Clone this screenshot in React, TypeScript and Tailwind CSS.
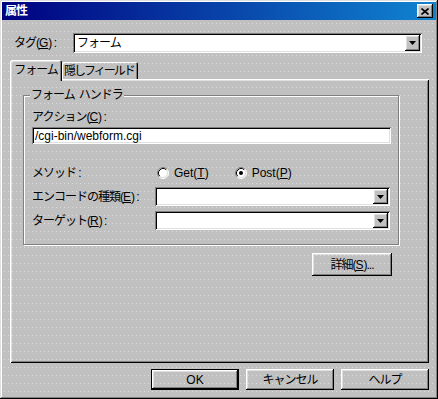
import type { ReactNode } from 'react';

const font = "font-['Liberation_Sans','Noto_Sans_CJK_JP',sans-serif]";
const dots =
  'bg-[#c0c0c0] bg-[linear-gradient(#c0c0c0_7px,transparent_7px),linear-gradient(to_right,#dcdcdc_1px,#c0c0c0_1px)] bg-[length:4px_8px]';
const raised =
  'shadow-[inset_-1px_-1px_#000,inset_1px_1px_#fff,inset_-2px_-2px_#808080,inset_2px_2px_#dfdfdf]';
const sunken =
  'shadow-[inset_1px_1px_#808080,inset_-1px_-1px_#fff,inset_2px_2px_#000,inset_-2px_-2px_#dfdfdf]';

const Key = ({ children }: { children: ReactNode }) => (
  <span className="underline underline-offset-1 tracking-normal">{children}</span>
);

const Arrow = () => (
  <svg width="7" height="4" viewBox="0 0 7 4">
    <path d="M0 0h7l-3.5 4z" fill="#000" />
  </svg>
);

function Combo({ value = '', className = '' }: { value?: string; className?: string }) {
  return (
    <div className={`flex items-stretch bg-white p-[2px] ${sunken} ${className}`}>
      <span className="flex flex-1 items-center pl-[2px] text-black">{value}</span>
      <div className={`flex w-[15px] items-center justify-center ${dots} ${raised}`}>
        <Arrow />
      </div>
    </div>
  );
}

function Radio({ checked }: { checked?: boolean }) {
  return (
    <svg width="12" height="12" viewBox="0 0 12 12">
      <circle cx="6" cy="6" r="5" fill="#fff" />
      <path d="M2.11 9.89A5.5 5.5 0 0 1 9.89 2.11" stroke="#808080" fill="none" />
      <path d="M9.89 2.11A5.5 5.5 0 0 1 2.11 9.89" stroke="#fff" fill="none" />
      <path d="M2.82 9.18A4.5 4.5 0 0 1 9.18 2.82" stroke="#000" fill="none" />
      <path d="M9.18 2.82A4.5 4.5 0 0 1 2.82 9.18" stroke="#dfdfdf" fill="none" />
      {checked && <circle cx="6" cy="6" r="2" fill="#000" />}
    </svg>
  );
}

export default function App() {
  return (
    <div
      className={`flex h-[399px] w-[438px] flex-col px-[2px] pt-[2px] text-[12px] leading-[14px] tracking-[-1px] whitespace-nowrap text-black ${font} ${dots} shadow-[inset_-1px_-1px_#000,inset_1px_1px_#dfdfdf,inset_-2px_-2px_#808080,inset_2px_2px_#fff]`}
    >
      {/* title bar */}
      <div className="flex h-[18px] items-center justify-between bg-[linear-gradient(to_right,#000080,#1084d0)] pl-[3px] pr-[3px]">
        <span className="font-bold text-white">属性</span>
        <div className={`flex h-[14px] w-[16px] items-center justify-center ${dots} ${raised}`}>
          <svg width="8" height="7" viewBox="0 0 8 7">
            <path d="M0.5 0.5l7 6M7.5 0.5l-7 6" stroke="#000" strokeWidth="1.6" />
          </svg>
        </div>
      </div>

      <div className="flex flex-1 flex-col pl-[8px] pr-[7px]">
        {/* tag row */}
        <div className="mt-[13px] flex h-[20px] items-center">
          <span className="w-[63px] pl-[4px]">
            タグ(<Key>G</Key>) :
          </span>
          <Combo value="フォーム" className="mr-[7px] h-[20px] flex-1" />
        </div>

        {/* tabs */}
        <div className="mt-[7px] flex h-[19px] items-end">
          <div
            className={`relative z-10 -mb-[2px] flex h-[21px] w-[52px] shrink-0 items-start justify-center rounded-t-[2px] pt-[3px] ${dots} shadow-[inset_1px_1px_#fff,inset_-1px_0_#000,inset_-2px_0_#808080,inset_2px_2px_#dfdfdf]`}
          >
            フォーム
          </div>
          <div className="flex h-[17px] w-[76px] shrink-0 items-center justify-center rounded-t-[2px] pr-[2px] tracking-[-2px] shadow-[inset_1px_1px_#fff,inset_-1px_0_#000,inset_-2px_0_#808080]">
            隠しフィールド
          </div>
        </div>

        {/* panel */}
        <div className="flex h-[284px] flex-col pl-[13px] pt-[16px] shadow-[inset_1px_1px_#fff,inset_-1px_-1px_#000,inset_2px_2px_#dfdfdf,inset_-2px_-2px_#808080]">
          <div className="relative h-[150px] w-[376px] border border-[#808080] pl-[8px] pt-[14px] shadow-[inset_1px_1px_#fff,1px_1px_#fff]">
            <span className={`absolute -top-[8px] left-[6px] flex gap-[4px] px-[1px] ${dots}`}>
              <span>フォーム</span>
              <span>ハンドラ</span>
            </span>
            <div>
              アクション(<Key>C</Key>) :
            </div>
            <div
              className={`mt-[3px] flex h-[17px] w-[359px] items-center bg-white pl-[3px] tracking-normal ${sunken}`}
            >
              /cgi-bin/webform.cgi
            </div>
            <div className="mt-[19px] flex h-[19px] items-center">
              <span className="w-[123px]">メソッド :</span>
              <div className="ml-[2px] flex items-center gap-[5px] tracking-normal">
                <Radio />
                <span>
                  Get(<Key>T</Key>)
                </span>
              </div>
              <div className="ml-[26px] flex items-center gap-[5px] tracking-normal">
                <Radio checked />
                <span>
                  Post(<Key>P</Key>)
                </span>
              </div>
            </div>
            <div className="mt-[5px] flex h-[19px] items-center">
              <span className="w-[123px]">
                エンコードの種類(<Key>E</Key>) :
              </span>
              <Combo className="h-[19px] w-[235px]" />
            </div>
            <div className="mt-[5px] flex h-[19px] items-center">
              <span className="w-[123px]">
                ターゲット(<Key>R</Key>) :
              </span>
              <Combo className="h-[19px] w-[235px]" />
            </div>
          </div>
          <div className="mt-[8px] flex w-[377px] justify-end pr-[8px]">
            <button className={`flex h-[23px] w-[80px] items-center justify-center ${raised}`}>
              詳細(<Key>S</Key>)...
            </button>
          </div>
        </div>

        {/* bottom buttons */}
        <div className="mt-[6px] flex justify-end gap-[7px]">
          <button className="flex h-[21px] w-[88px] items-center justify-center tracking-normal shadow-[inset_0_0_0_1px_#000,inset_-2px_-2px_#000,inset_2px_2px_#fff,inset_-3px_-3px_#808080,inset_3px_3px_#dfdfdf]">
            OK
          </button>
          <button className={`flex h-[21px] w-[88px] items-center justify-center ${raised}`}>キャンセル</button>
          <button className={`flex h-[21px] w-[88px] items-center justify-center ${raised}`}>ヘルプ</button>
        </div>
      </div>
    </div>
  );
}
